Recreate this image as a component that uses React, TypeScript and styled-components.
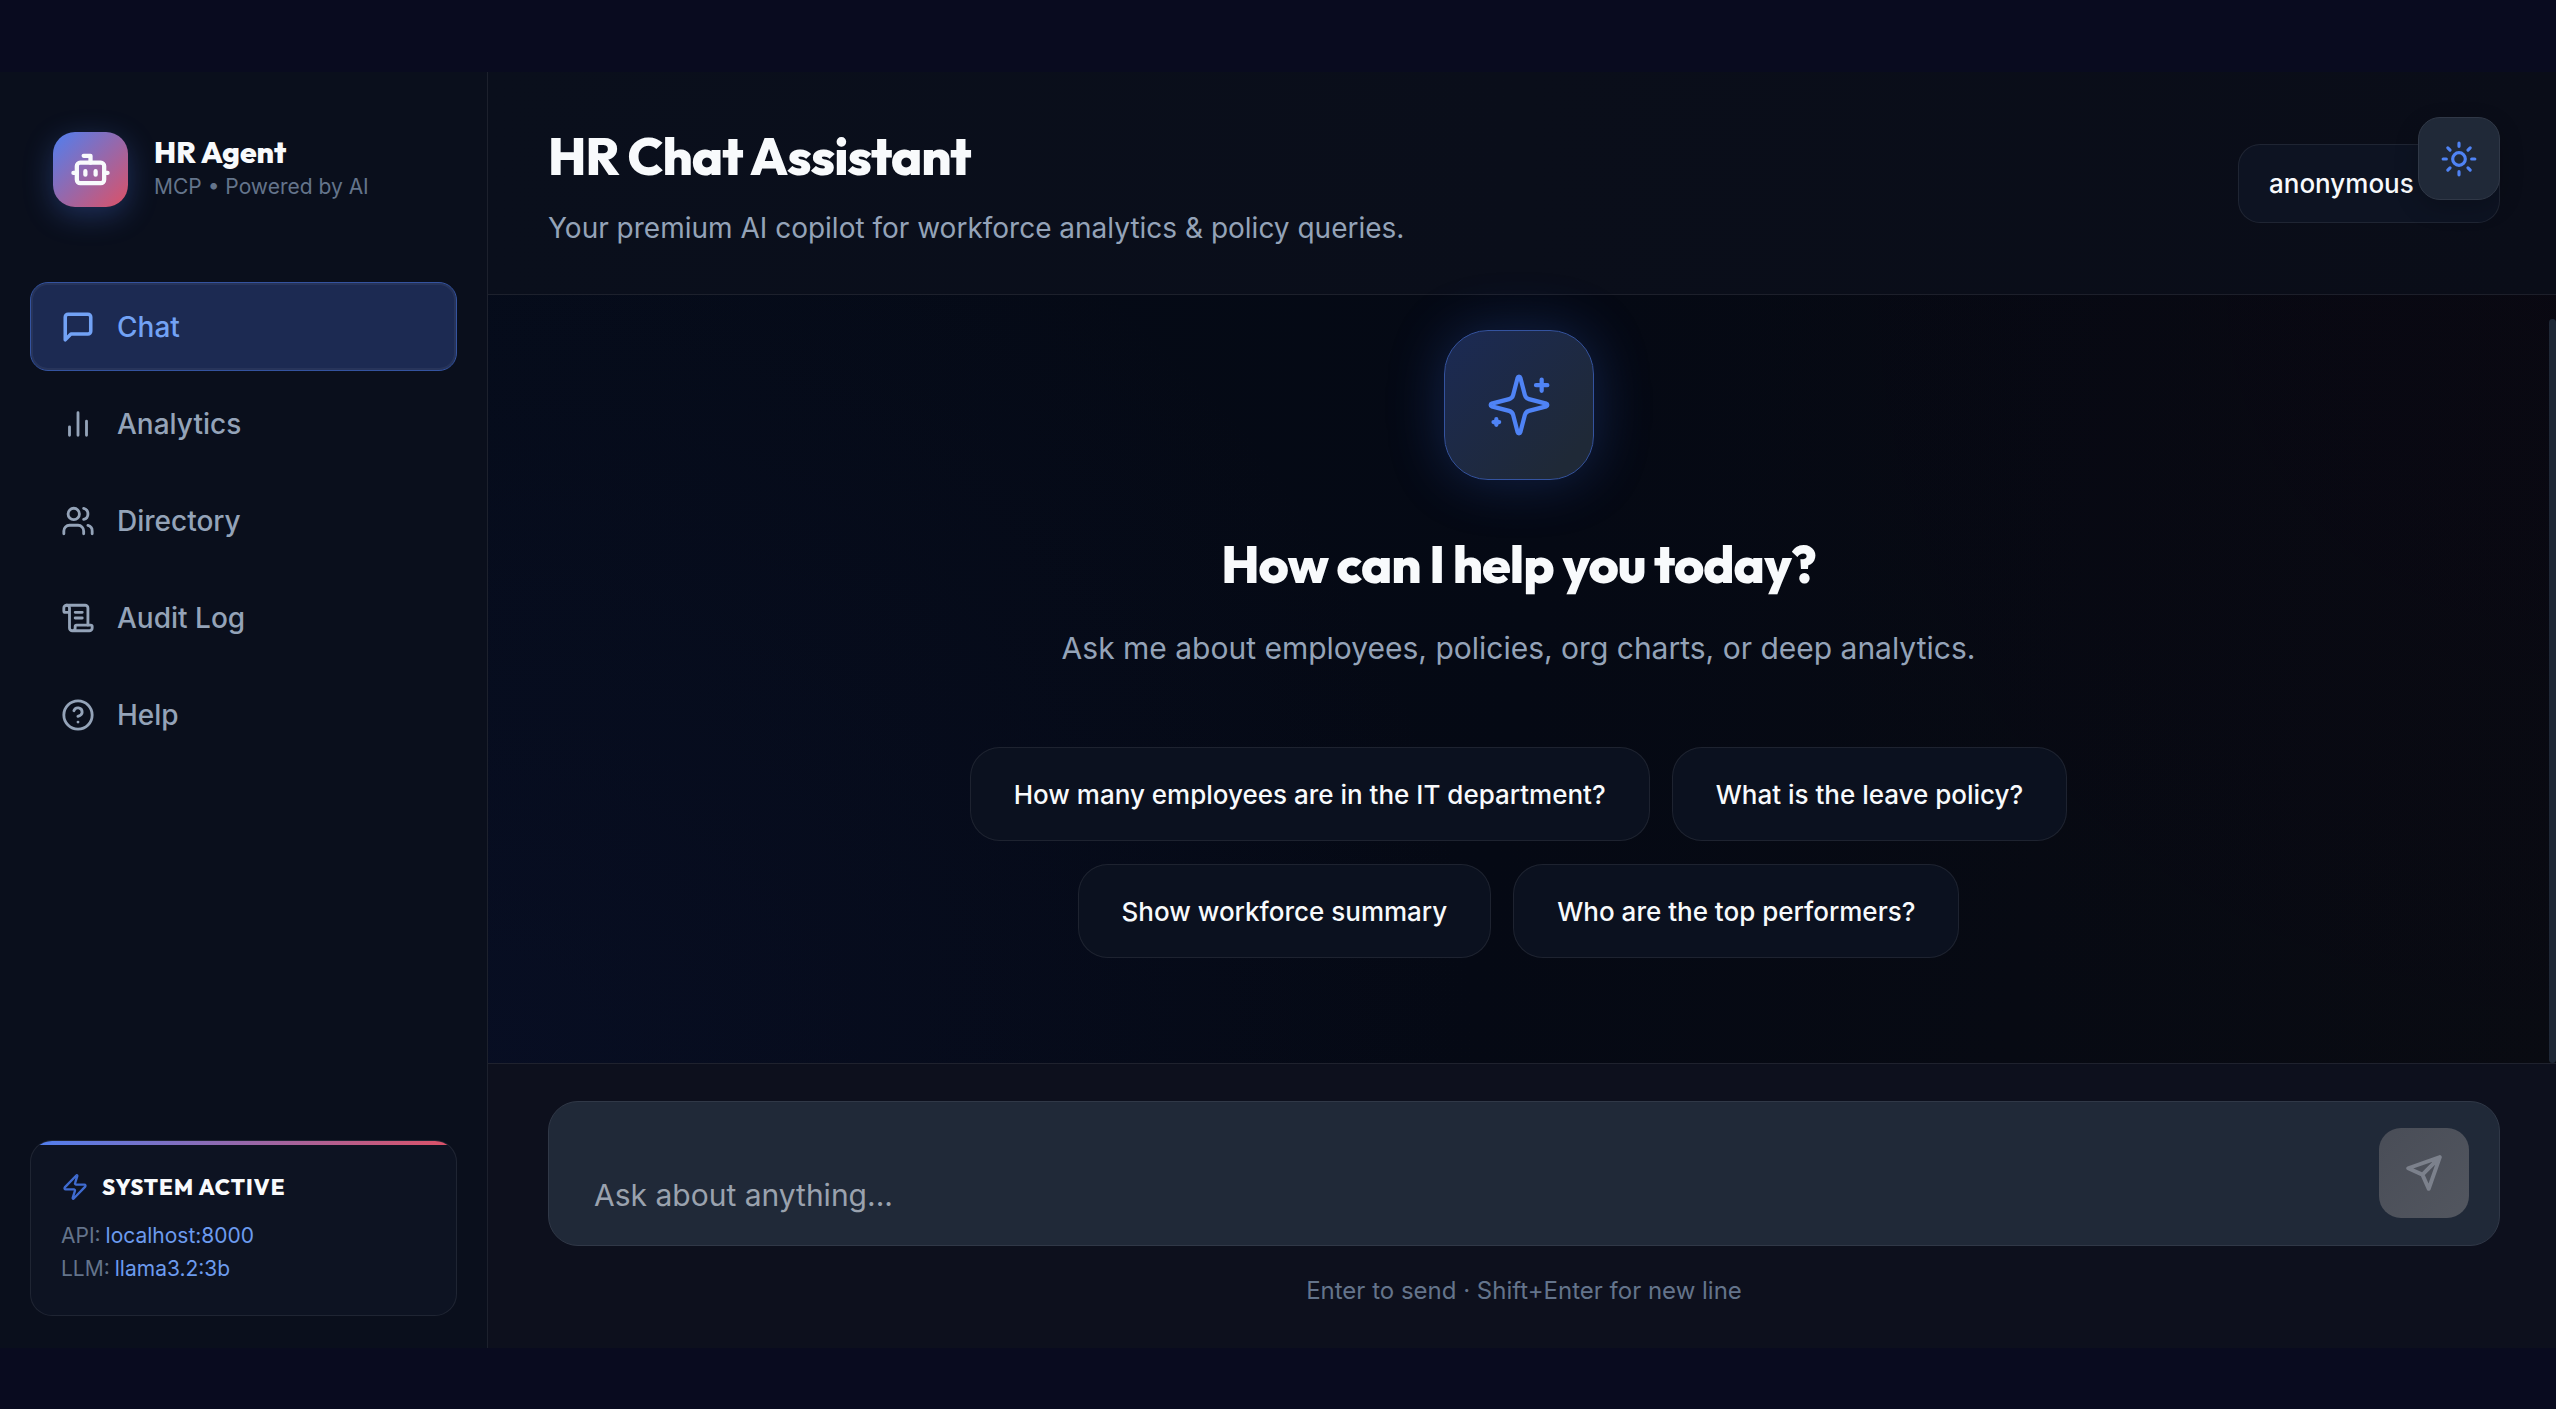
import React, { useState } from "react";
import styled, { createGlobalStyle } from "styled-components";

const GlobalStyle = createGlobalStyle`
  *, *::before, *::after { box-sizing: border-box; }
  body {
    margin: 0;
    background: #090b1f;
    color: #f8fafc;
    font-family: Inter, "Liberation Sans", sans-serif;
    -webkit-font-smoothing: antialiased;
  }
  h1, h2, p, ul, dl, dd { margin: 0; padding: 0; }
  button, textarea { font: inherit; color: inherit; }
`;

const displayFont = `Outfit, Lato, "Liberation Sans", sans-serif`;
const line = "rgba(255, 255, 255, 0.08)";
const brandGradient = "#4f7ff0, #dd5166";

const Page = styled.div`
  display: flex;
  flex-direction: column;
  height: 100vh;
  min-height: 1200px;
  padding: 72px 0 61px;
`;

const Shell = styled.div`
  position: relative;
  flex: 1;
  min-height: 0;
  display: grid;
  grid-template-columns: 488px minmax(0, 1fr);
`;

const Sidebar = styled.aside`
  display: flex;
  flex-direction: column;
  padding: 60px 30px 32px;
  background: #0a0f1c;
  border-right: 1px solid ${line};
`;

const Brand = styled.div`
  display: flex;
  align-items: center;
  gap: 26px;
  padding: 0 23px;
  margin-bottom: 75px;
`;

const Logo = styled.div`
  display: grid;
  place-items: center;
  width: 75px;
  height: 75px;
  border-radius: 22px;
  background: linear-gradient(135deg, ${brandGradient});
  box-shadow: 0 8px 30px rgba(79, 127, 240, 0.3);
`;

const BrandName = styled.p`
  font: 800 30px/34px ${displayFont};
`;

const BrandNote = styled.p`
  font-size: 21px;
  line-height: 36px;
  color: #64748b;
`;

const Nav = styled.nav`
  display: flex;
  flex-direction: column;
  gap: 8px;
`;

const NavButton = styled.button<{ $active: boolean }>`
  display: flex;
  align-items: center;
  gap: 22px;
  height: 89px;
  padding: 0 30px;
  border: 1px solid ${(p) => (p.$active ? "#34539f" : "transparent")};
  border-radius: 18px;
  background: ${(p) => (p.$active ? "#1c2a52" : "transparent")};
  box-shadow: ${(p) => (p.$active ? "inset 0 0 0 2px rgba(255, 255, 255, 0.05)" : "none")};
  color: ${(p) => (p.$active ? "#72a2f5" : "#94a3b8")};
  font-size: 28px;
  font-weight: 500;
  text-align: left;
  cursor: pointer;
`;

const StatusCard = styled.section`
  position: relative;
  overflow: hidden;
  margin-top: auto;
  padding: 30px;
  border: 1px solid ${line};
  border-radius: 22px;
  background: #0d1322;

  &::before {
    content: "";
    position: absolute;
    inset: 0 0 auto;
    height: 4px;
    background: linear-gradient(90deg, ${brandGradient});
  }
`;

const StatusTitle = styled.h2`
  display: flex;
  align-items: center;
  gap: 13px;
  margin-bottom: 16px;
  font: 800 22px/32px ${displayFont};
  letter-spacing: 1px;

  svg { color: #3f6bd0; }
`;

const StatusList = styled.dl`
  font-size: 21px;
  line-height: 33px;
  color: #64748b;
`;

const StatusRow = styled.div`
  display: flex;
  gap: 5px;

  dd { color: #6c9bee; }
`;

const Main = styled.main`
  display: flex;
  flex-direction: column;
  min-width: 0;
  min-height: 0;
`;

const Header = styled.header`
  display: flex;
  align-items: center;
  justify-content: space-between;
  padding: 46px 56px 45px 60px;
  border-bottom: 1px solid ${line};
  background: linear-gradient(90deg, #0a0f1c, #0a0d18);
`;

const Title = styled.h1`
  margin-bottom: 13px;
  font: 800 52px/76px ${displayFont};
  letter-spacing: -1px;
`;

const Subtitle = styled.p`
  font-size: 28px;
  line-height: 42px;
  color: #94a3b8;
`;

const UserPill = styled.div`
  display: flex;
  align-items: center;
  width: 262px;
  height: 79px;
  padding: 0 30px;
  border: 1px solid ${line};
  border-radius: 22px;
  background: #0d1322;
  font-size: 26px;
  font-weight: 500;
`;

const ThemeButton = styled.button`
  position: absolute;
  top: 45px;
  right: 56px;
  display: grid;
  place-items: center;
  width: 82px;
  height: 83px;
  padding: 0;
  border: 1px solid #303847;
  border-radius: 22px;
  background: #202938;
  box-shadow: 0 8px 24px rgba(0, 0, 0, 0.2);
  color: #4f83f5;
  cursor: pointer;
`;

const Conversation = styled.section`
  flex: 1;
  min-height: 0;
  display: flex;
  background:
    radial-gradient(circle at 0% 100%, rgba(16, 24, 70, 0.24), transparent 45%),
    radial-gradient(circle at 100% 0%, rgba(12, 0, 16, 0.24), transparent 40%),
    linear-gradient(100deg, #050b18, #050914 50%, #090b12);
`;

const Welcome = styled.div`
  flex: 1;
  display: flex;
  flex-direction: column;
  align-items: center;
  padding: 35px 60px 0;
  text-align: center;
`;

const ScrollTrack = styled.div`
  flex: none;
  width: 7px;
  padding-top: 24px;
`;

const ScrollThumb = styled.div`
  height: 100%;
  border-radius: 4px;
  background: #1f2837;
`;

const WelcomeIcon = styled.div`
  display: grid;
  place-items: center;
  width: 150px;
  height: 150px;
  margin-bottom: 52px;
  border: 1px solid #34539f;
  border-radius: 44px;
  background: linear-gradient(135deg, #1b2a54, #1f2937 85%);
  box-shadow: 0 0 56px rgba(60, 110, 240, 0.25);
  color: #4f83f5;
`;

const WelcomeTitle = styled.h2`
  margin-bottom: 28px;
  font: 800 52px/64px ${displayFont};
  letter-spacing: -1px;
`;

const WelcomeText = styled.p`
  margin-bottom: 75px;
  font-size: 30px;
  line-height: 48px;
  color: #94a3b8;
`;

const Suggestions = styled.div`
  display: flex;
  flex-wrap: wrap;
  justify-content: center;
  gap: 23px 22px;
  max-width: 1200px;
`;

const Suggestion = styled.button`
  height: 94px;
  padding: 0 43px;
  border: 1px solid ${line};
  border-radius: 30px;
  background: #0b111f;
  font-size: 26px;
  font-weight: 500;
  cursor: pointer;
`;

const Composer = styled.form`
  padding: 37px 56px 40px 60px;
  border-top: 1px solid ${line};
  background: #0d101d;
`;

const InputBox = styled.div`
  display: flex;
  align-items: flex-end;
  gap: 24px;
  height: 145px;
  padding: 26px 30px 27px 45px;
  border: 1px solid #303847;
  border-radius: 30px;
  background: #202938;
`;

const MessageInput = styled.textarea`
  flex: 1;
  height: 48px;
  padding: 0;
  border: 0;
  outline: 0;
  resize: none;
  background: transparent;
  font-size: 30px;
  line-height: 50px;

  &::placeholder { color: #9aa2ae; opacity: 1; }
`;

const SendButton = styled.button`
  display: grid;
  place-items: center;
  width: 90px;
  height: 90px;
  padding: 0;
  border: 0;
  border-radius: 22px;
  background: linear-gradient(135deg, #494d57, #52565f);
  color: #7c818c;
`;

const Hint = styled.p`
  margin-top: 28px;
  font-size: 24px;
  line-height: 34px;
  color: #64748b;
  text-align: center;
`;

type IconProps = { size: number; stroke?: number; children: React.ReactNode };

function Icon({ size, stroke = 2, children }: IconProps) {
  return (
    <svg
      width={size}
      height={size}
      viewBox="0 0 24 24"
      fill="none"
      stroke="currentColor"
      strokeWidth={stroke}
      strokeLinecap="round"
      strokeLinejoin="round"
      aria-hidden="true"
    >
      {children}
    </svg>
  );
}

const navItems = [
  {
    label: "Chat",
    glyph: <path d="M21 15a2 2 0 0 1-2 2H7l-4 4V5a2 2 0 0 1 2-2h14a2 2 0 0 1 2 2z" />,
  },
  {
    label: "Analytics",
    glyph: <path d="M18 20V10M12 20V4M6 20v-6" />,
  },
  {
    label: "Directory",
    glyph: (
      <>
        <path d="M16 21v-2a4 4 0 0 0-4-4H6a4 4 0 0 0-4 4v2" />
        <circle cx="9" cy="7" r="4" />
        <path d="M22 21v-2a4 4 0 0 0-3-3.87M16 3.13a4 4 0 0 1 0 7.75" />
      </>
    ),
  },
  {
    label: "Audit Log",
    glyph: (
      <>
        <path d="M15 12h-5M15 8h-5M19 17V5a2 2 0 0 0-2-2H4" />
        <path d="M8 21h12a2 2 0 0 0 2-2v-1a1 1 0 0 0-1-1H11a1 1 0 0 0-1 1v1a2 2 0 1 1-4 0V5a2 2 0 1 0-4 0v2a1 1 0 0 0 1 1h3" />
      </>
    ),
  },
  {
    label: "Help",
    glyph: (
      <>
        <circle cx="12" cy="12" r="10" />
        <path d="M9.09 9a3 3 0 0 1 5.83 1c0 2-3 3-3 3M12 17h.01" />
      </>
    ),
  },
];

const suggestions = [
  "How many employees are in the IT department?",
  "What is the leave policy?",
  "Show workforce summary",
  "Who are the top performers?",
];

export default function App() {
  const [active, setActive] = useState("Chat");
  const [message, setMessage] = useState("");

  return (
    <Page>
      <GlobalStyle />
      <Shell>
        <Sidebar>
          <Brand>
            <Logo>
              <Icon size={41} stroke={2.5}>
                <path d="M12 8V4H8" />
                <rect width="16" height="12" x="4" y="8" rx="2" />
                <path d="M2 14h2M20 14h2M15 13v2M9 13v2" />
              </Icon>
            </Logo>
            <div>
              <BrandName>HR Agent</BrandName>
              <BrandNote>MCP • Powered by AI</BrandNote>
            </div>
          </Brand>

          <Nav aria-label="Main">
            {navItems.map(({ label, glyph }) => (
              <NavButton
                key={label}
                type="button"
                $active={label === active}
                aria-current={label === active ? "page" : undefined}
                onClick={() => setActive(label)}
              >
                <Icon size={34} stroke={label === active ? 2.5 : 2}>{glyph}</Icon>
                {label}
              </NavButton>
            ))}
          </Nav>

          <StatusCard>
            <StatusTitle>
              <Icon size={28}>
                <path d="M4 14a1 1 0 0 1-.78-1.63l9.9-10.2a.5.5 0 0 1 .86.46l-1.92 6.02A1 1 0 0 0 13 10h7a1 1 0 0 1 .78 1.63l-9.9 10.2a.5.5 0 0 1-.86-.46l1.92-6.02A1 1 0 0 0 11 14z" />
              </Icon>
              SYSTEM ACTIVE
            </StatusTitle>
            <StatusList>
              <StatusRow><dt>API:</dt><dd>localhost:8000</dd></StatusRow>
              <StatusRow><dt>LLM:</dt><dd>llama3.2:3b</dd></StatusRow>
            </StatusList>
          </StatusCard>
        </Sidebar>

        <Main>
          <Header>
            <div>
              <Title>HR Chat Assistant</Title>
              <Subtitle>Your premium AI copilot for workforce analytics &amp; policy queries.</Subtitle>
            </div>
            <UserPill>anonymous</UserPill>
          </Header>

          <Conversation>
            <Welcome>
              <WelcomeIcon>
                <Icon size={68} stroke={1.5}>
                  <path d="M9.937 15.5A2 2 0 0 0 8.5 14.063l-6.135-1.582a.5.5 0 0 1 0-.962L8.5 9.936A2 2 0 0 0 9.937 8.5l1.582-6.135a.5.5 0 0 1 .963 0L14.063 8.5A2 2 0 0 0 15.5 9.937l6.135 1.581a.5.5 0 0 1 0 .964L15.5 14.063a2 2 0 0 0-1.437 1.437l-1.582 6.135a.5.5 0 0 1-.963 0z" />
                  <path d="M20 3v4M22 5h-4M4 17v2M5 18H3" />
                </Icon>
              </WelcomeIcon>
              <WelcomeTitle>How can I help you today?</WelcomeTitle>
              <WelcomeText>Ask me about employees, policies, org charts, or deep analytics.</WelcomeText>
              <Suggestions>
                {suggestions.map((text) => (
                  <Suggestion key={text} type="button" onClick={() => setMessage(text)}>
                    {text}
                  </Suggestion>
                ))}
              </Suggestions>
            </Welcome>
            <ScrollTrack>
              <ScrollThumb />
            </ScrollTrack>
          </Conversation>

          <Composer onSubmit={(e) => e.preventDefault()}>
            <InputBox>
              <MessageInput
                rows={1}
                aria-label="Message"
                placeholder="Ask about anything..."
                value={message}
                onChange={(e) => setMessage(e.target.value)}
              />
              <SendButton type="submit" aria-label="Send" disabled={!message}>
                <Icon size={38} stroke={2.5}>
                  <path d="m22 2-7 20-4-9-9-4ZM22 2 11 13" />
                </Icon>
              </SendButton>
            </InputBox>
            <Hint>Enter to send · Shift+Enter for new line</Hint>
          </Composer>
        </Main>

        <ThemeButton type="button" aria-label="Switch to light theme">
          <Icon size={38}>
            <circle cx="12" cy="12" r="4" />
            <path d="M12 2v2M12 20v2m-7.07-17.07 1.41 1.41m11.32 11.32 1.41 1.41M2 12h2M20 12h2M6.34 17.66l-1.41 1.41M19.07 4.93l-1.41 1.41" />
          </Icon>
        </ThemeButton>
      </Shell>
    </Page>
  );
}
